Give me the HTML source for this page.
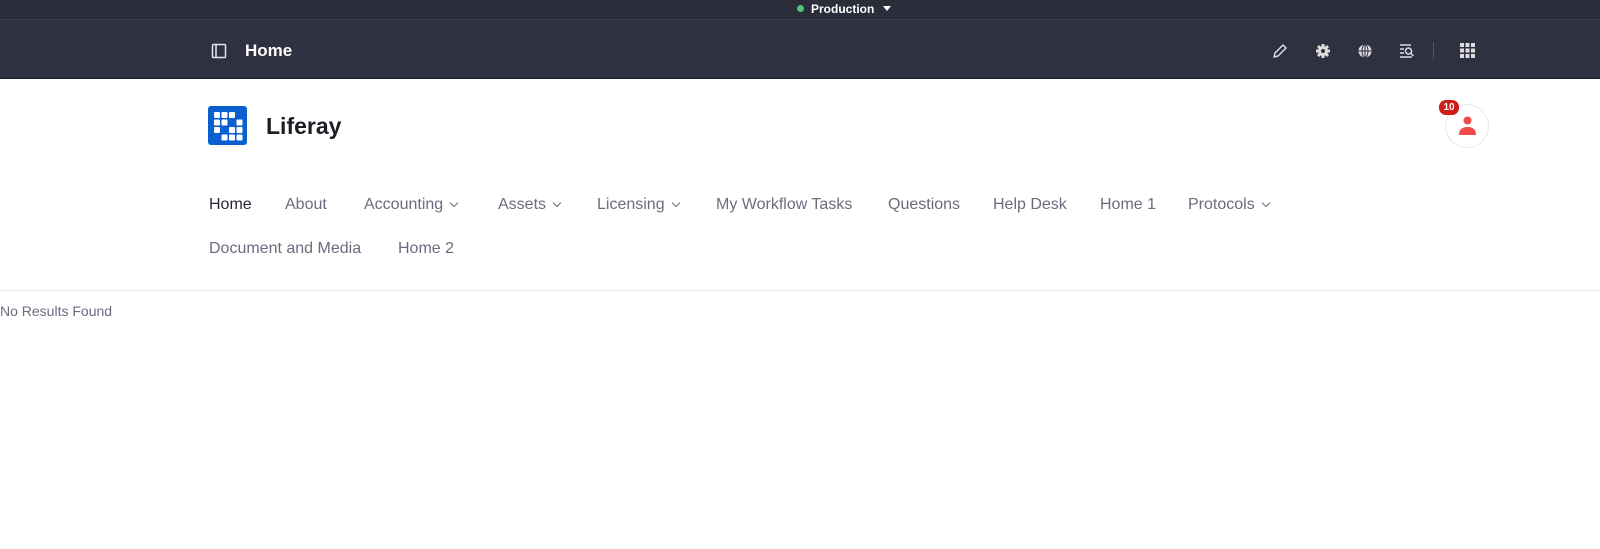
<!DOCTYPE html>
<html><head><meta charset="utf-8"><style>
*{margin:0;padding:0;box-sizing:border-box}
body{width:1600px;height:549px;background:#fff;font-family:"Liberation Sans",sans-serif;position:relative;overflow:hidden}
.top{position:absolute;left:0;top:0;width:1600px;height:20px;background:#2b2e3a;border-bottom:1px solid #3a3d4a}
.bar{position:absolute;left:0;top:20px;width:1600px;height:59px;background:#2f3140;border-bottom:1px solid #1c1d26}
.abs{position:absolute}
.nav{position:absolute;font-size:16px;color:#6b6c7e}
.nav span{position:absolute;white-space:nowrap}
.chev{display:inline-block;width:6px;height:6px;border-right:1.3px solid #6b6c7e;border-bottom:1.3px solid #6b6c7e;transform:rotate(45deg);margin-left:8px;position:relative;top:-3px}
</style></head><body>
<div class="top"></div>
<div class="abs" style="left:797px;top:5px;width:7px;height:7px;border-radius:50%;background:#4fc77b"></div>
<div class="abs" style="left:811px;top:2px;color:#fff;font-size:12px;font-weight:bold">Production</div>
<div class="abs" style="left:883px;top:6px;width:0;height:0;border-left:4px solid transparent;border-right:4px solid transparent;border-top:5px solid #fff"></div>
<div class="bar"></div>
<svg class="abs" style="left:211px;top:43px" width="16" height="16" viewBox="0 0 16 16"><rect x="1.5" y="1.5" width="13" height="13" rx="1" fill="none" stroke="#e6e6ea" stroke-width="1.5"/><line x1="5" y1="2" x2="5" y2="14" stroke="#e6e6ea" stroke-width="1.5"/></svg>
<div class="abs" style="left:245px;top:41px;color:#fff;font-size:17px;font-weight:bold">Home</div>
<svg class="abs" style="left:1272px;top:43px" width="16" height="16" viewBox="0 0 16 16"><path d="M2 14l1-4 8-8 3 3-8 8z" fill="none" stroke="#ddd" stroke-width="1.5" stroke-linejoin="round"/></svg>
<svg class="abs" style="left:1315px;top:43px" width="16" height="16" viewBox="0 0 16 16"><circle cx="8" cy="8" r="5" fill="#ddd"/><g stroke="#ddd" stroke-width="3"><line x1="8" y1="1" x2="8" y2="15"/><line x1="1" y1="8" x2="15" y2="8"/><line x1="3" y1="3" x2="13" y2="13"/><line x1="13" y1="3" x2="3" y2="13"/></g><circle cx="8" cy="8" r="2" fill="#2f3140"/></svg>
<svg class="abs" style="left:1357px;top:43px" width="16" height="16" viewBox="0 0 16 16"><circle cx="8" cy="8" r="6.5" fill="#ddd"/><g stroke="#2f3140" stroke-width="1"><line x1="8" y1="1" x2="8" y2="15"/><line x1="1" y1="8" x2="15" y2="8"/><ellipse cx="8" cy="8" rx="3" ry="6.5" fill="none"/></g></svg>
<svg class="abs" style="left:1399px;top:43px" width="16" height="16" viewBox="0 0 16 16"><g stroke="#ddd" stroke-width="1.5" fill="none"><line x1="1" y1="2" x2="12" y2="2"/><line x1="1" y1="6" x2="5" y2="6"/><line x1="1" y1="10" x2="5" y2="10"/><line x1="1" y1="14" x2="13" y2="14"/><circle cx="9.5" cy="8" r="3"/><line x1="11.5" y1="10" x2="14.5" y2="13"/></g></svg>
<div class="abs" style="left:1433px;top:42px;width:1px;height:17px;background:#555866"></div>
<svg class="abs" style="left:1460px;top:43px" width="15" height="15" viewBox="0 0 15 15" fill="#ddd"><rect x="0" y="0" width="4" height="4"/><rect x="5.5" y="0" width="4" height="4"/><rect x="11" y="0" width="4" height="4"/><rect x="0" y="5.5" width="4" height="4"/><rect x="5.5" y="5.5" width="4" height="4"/><rect x="11" y="5.5" width="4" height="4"/><rect x="0" y="11" width="4" height="4"/><rect x="5.5" y="11" width="4" height="4"/><rect x="11" y="11" width="4" height="4"/></svg>
<svg class="abs" style="left:208px;top:106px" width="39" height="39" viewBox="0 0 39 39"><rect width="39" height="39" rx="3" fill="#0b5fcf"/><g fill="#fff">
<rect x="6" y="6" width="6" height="6" rx="1"/><rect x="13.5" y="6" width="6" height="6" rx="1"/><rect x="21" y="6" width="6" height="6" rx="1"/>
<rect x="6" y="13.5" width="6" height="6" rx="1"/><rect x="13.5" y="13.5" width="6" height="6" rx="1"/><rect x="28.5" y="13.5" width="6" height="6" rx="1"/>
<rect x="6" y="21" width="6" height="6" rx="1"/><rect x="21" y="21" width="6" height="6" rx="1"/><rect x="28.5" y="21" width="6" height="6" rx="1"/>
<rect x="13.5" y="28.5" width="6" height="6" rx="1"/><rect x="21" y="28.5" width="6" height="6" rx="1"/><rect x="28.5" y="28.5" width="6" height="6" rx="1"/></g></svg>
<div class="abs" style="left:266px;top:113px;font-size:23px;font-weight:bold;color:#1c1c24">Liferay</div>
<div class="abs" style="left:1445px;top:104px;width:44px;height:44px;border-radius:50%;border:1px solid #e7e7ed;background:#fff"></div>
<svg class="abs" style="left:1458px;top:115px" width="19" height="22" viewBox="0 0 19 22"><circle cx="9.5" cy="5.5" r="4" fill="#ef4b4b"/><path d="M1 20c0-6 3.5-8 8.5-8s8.5 2 8.5 8z" fill="#ef4b4b"/></svg>
<div class="abs" style="left:1439px;top:100px;width:20px;height:15px;border-radius:7px;background:#d01b1b;color:#fff;font-size:10px;font-weight:bold;text-align:center;line-height:15px">10</div>
<div class="nav" style="left:0;top:196px;width:1600px">
<span style="left:209px;color:#272833">Home</span>
<span style="left:285px">About</span>
<span style="left:364px">Accounting<i class="chev"></i></span>
<span style="left:498px">Assets<i class="chev"></i></span>
<span style="left:597px">Licensing<i class="chev"></i></span>
<span style="left:716px">My Workflow Tasks</span>
<span style="left:888px">Questions</span>
<span style="left:993px">Help Desk</span>
<span style="left:1100px">Home 1</span>
<span style="left:1188px">Protocols<i class="chev"></i></span>
<span style="left:209px;top:44px">Document and Media</span>
<span style="left:398px;top:44px">Home 2</span>
</div>
<div class="abs" style="left:0;top:290px;width:1600px;height:1px;background:#e7e7ed"></div>
<div class="abs" style="left:0;top:303px;font-size:14px;color:#6b6c7e">No Results Found</div>
</body></html>
